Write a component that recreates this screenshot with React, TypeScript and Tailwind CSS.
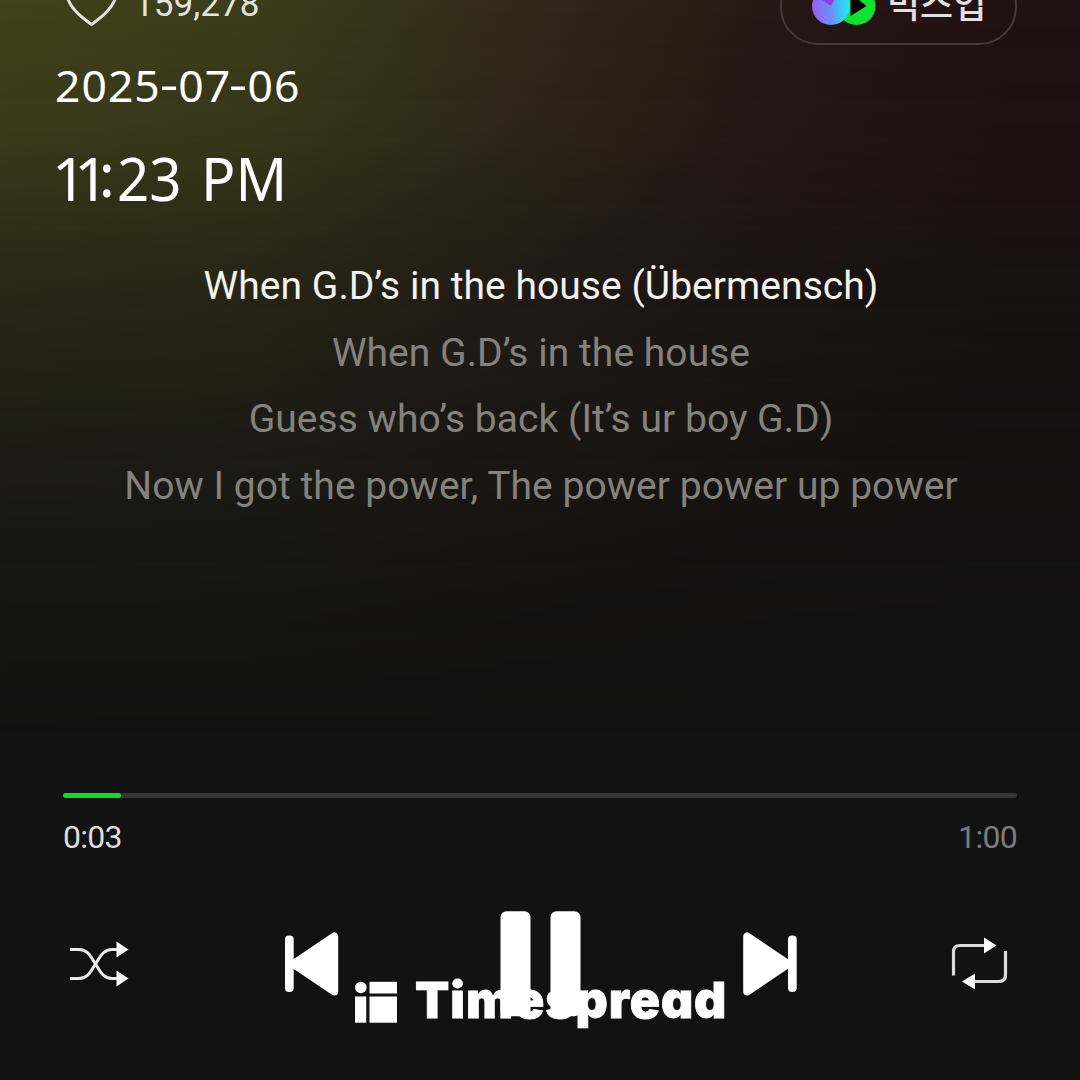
const lyrics = [
  "When G.D’s in the house (Übermensch)",
  "When G.D’s in the house",
  "Guess who’s back (It’s ur boy G.D)",
  "Now I got the power, The power power up power",
];

function Heart() {
  return (
    <svg className="h-[60px] w-[56px] shrink-0" viewBox="0 0 56 60" fill="none" stroke="#e4e4de" strokeWidth="3">
      <path d="M27.500 54.500C17 47 2.500 36 2.500 21C2.500 11 9 5 16 5C21 5 25 8 27.500 12C30 8 34 5 39 5C46 5 52.500 11 52.500 21C52.500 36 38 47 27.500 54.500Z" />
    </svg>
  );
}

function MixIcon() {
  return (
    <svg className="h-[38px] w-[64px] shrink-0" viewBox="0 0 64 38">
      <defs>
        <linearGradient id="mix" x1="0" y1="0.5" x2="1" y2="0.5">
          <stop offset="0" stopColor="#9a5cf0" />
          <stop offset="0.5" stopColor="#6b8ff5" />
          <stop offset="0.75" stopColor="#3fc4f6" />
          <stop offset="1" stopColor="#22e8f8" />
        </linearGradient>
      </defs>
      <circle cx="44.500" cy="19" r="19" fill="#0fe32f" />
      <circle cx="19" cy="19" r="19" fill="url(#mix)" />
      <path d="M19 19L9 12A19 19 0 0 1 28 2Z" fill="#8a3fe0" />
      <path d="M38.500 7V29L54.500 19L46 12Z" fill="#000" />
    </svg>
  );
}

function Shuffle() {
  return (
    <svg className="h-[106px] w-16" viewBox="66 911 64 106" fill="none" stroke="#ececec" strokeWidth="3">
      <path d="M70 949.500H79C88 949.500 91 957 95.500 964C100 971 103 978.500 112 978.500H117" />
      <path d="M70 978.500H79C88 978.500 91 971 95.500 964C100 957 103 949.500 112 949.500H117" />
      <path d="M116.500 941.500L128.500 949.500L116.500 957.500ZM116.500 970.500L128.500 978.500L116.500 986.500Z" fill="#fff" stroke="none" />
    </svg>
  );
}

function Previous() {
  return (
    <svg className="h-[106px] w-16" viewBox="282.5 911 64 106" fill="#fff">
      <rect x="284.500" y="935.500" width="8.700" height="56.500" rx="4" />
      <path d="M293 964L333.700 936.500V991.500Z" stroke="#fff" strokeWidth="8" strokeLinejoin="round" />
    </svg>
  );
}

function Pause() {
  return (
    <svg className="h-[106px] w-[82px]" viewBox="499 911 82 106" fill="#fff">
      <rect x="500.500" y="911.300" width="30" height="105" rx="6" />
      <rect x="550.500" y="911.300" width="30" height="105" rx="6" />
    </svg>
  );
}

function Next() {
  return (
    <svg className="h-[106px] w-16" viewBox="733.5 911 64 106" fill="#fff">
      <rect x="787.500" y="935.500" width="8.700" height="56.500" rx="4" />
      <path d="M787.500 964L746.700 936.500V991.500Z" stroke="#fff" strokeWidth="8" strokeLinejoin="round" />
    </svg>
  );
}

function Repeat() {
  return (
    <svg className="h-[106px] w-16" viewBox="950 911 64 106" fill="none" stroke="#dcdcdc" strokeWidth="3.200">
      <path d="M953.500 975.500V952Q953.500 945.500 960 945.500H985" />
      <path d="M1005.500 951V975Q1005.500 981.500 999 981.500H974" />
      <path d="M984 937.500L996.500 945.500L984 953.500ZM975 973.500V989.500L962 981.500Z" fill="#fff" stroke="none" />
    </svg>
  );
}

function Watermark() {
  return (
    <div className="absolute top-[970px] left-[355px] flex h-[60px] items-start text-white">
      <svg className="mt-[11px] h-[42px] w-[43px]" viewBox="0 0 43 42" fill="#fff">
        <circle cx="5.800" cy="6.500" r="5.800" />
        <rect x="14.500" y="0.800" width="27.500" height="11.700" />
        <rect x="0" y="15.500" width="11.200" height="26.200" />
        <rect x="14.500" y="15.500" width="27.500" height="26.200" />
      </svg>
      <span className="ml-[17px] font-['Inter',sans-serif] text-[50px] leading-[61px] font-black tracking-[0.9px] [-webkit-text-stroke:0.8px_#fff] [font-feature-settings:'cv11']">
        Timespread
      </span>
    </div>
  );
}

export default function App() {
  return (
    <main className="relative flex h-[1080px] w-[1080px] flex-col overflow-hidden bg-[#121212] font-['Roboto',sans-serif] text-white">
      <div className="pointer-events-none absolute inset-0 bg-[linear-gradient(94deg,#40421b_0%,#3c3d1b_22%,#33291a_44%,#271814_66%,#211012_88%,#211012_100%)] [mask-image:linear-gradient(180deg,#000_0%,rgba(0,0,0,0.86)_12%,rgba(0,0,0,0.5)_25%,rgba(0,0,0,0.25)_40%,rgba(0,0,0,0.08)_55%,transparent_68%)]" />

      <header className="relative flex h-[45px] items-end justify-between pr-[63px] pl-[64px]">
        <div className="flex shrink-0 items-end">
          <div className="mb-[15px]">
            <Heart />
          </div>
          <span className="mb-[20px] ml-[14px] text-[35px] leading-[41px] tracking-[0.1px] text-[#e4e4de]">159,278</span>
        </div>
        <div className="flex h-[78px] w-[237px] shrink-0 items-center rounded-[38px] border-2 border-[#483838] pl-[30px]">
          <MixIcon />
          <span className="mb-[8px] ml-[11px] font-['Noto_Sans_CJK_KR',sans-serif] text-[36px] leading-[54px] font-medium text-[#e4dfe0]">믹스업</span>
        </div>
      </header>

      <div className="relative mt-[9px] flex flex-col pl-[52px] font-['Noto_Sans',sans-serif]">
        <time className="flex pl-[3px] text-[44.5px] leading-[62px] tracking-[1px]">
          <span>2025</span>
          <span className="mx-px -translate-y-[2px] scale-x-[1.3]">-</span>
          <span>07</span>
          <span className="mr-px -translate-y-[2px] scale-x-[1.3]">-</span>
          <span>06</span>
        </time>
        <time className="mt-[22px] flex text-[60px] leading-[80px] whitespace-pre">
          <span className="tracking-[-12px]">1</span>
          <span className="tracking-[-9px]">1</span>
          <span className="mr-[2px] -ml-px -translate-y-[4px]">:</span>
          <span className="mr-[16px] origin-left scale-x-[0.94]">23</span>
          <span className="origin-left scale-x-[0.95]">PM</span>
        </time>
      </div>

      <section className="relative mt-[35px] pl-[2px] text-center text-[39px] leading-[66.67px] tracking-[0.04px]">
        {lyrics.map((line, i) => (
          <p key={line} className={i === 0 ? "text-[#f2f2ee]" : "text-[#84827d]"}>
            {line}
          </p>
        ))}
      </section>

      <section className="relative mt-[273px] px-[63px]">
        <div className="h-[5.5px] rounded-full bg-[#363636]">
          <div className="h-full w-[58px] rounded-full bg-[#10dc20]" />
        </div>
        <div className="mt-[20px] flex justify-between text-[32px] leading-[38px] tracking-[-0.7px]">
          <span className="text-[#dedede]">0:03</span>
          <span className="text-[#7c7c7c]">1:00</span>
        </div>
      </section>

      <nav className="relative mt-[55px] flex justify-between px-[66px]">
        <Shuffle />
        <Previous />
        <Pause />
        <Next />
        <Repeat />
      </nav>

      <Watermark />
    </main>
  );
}
